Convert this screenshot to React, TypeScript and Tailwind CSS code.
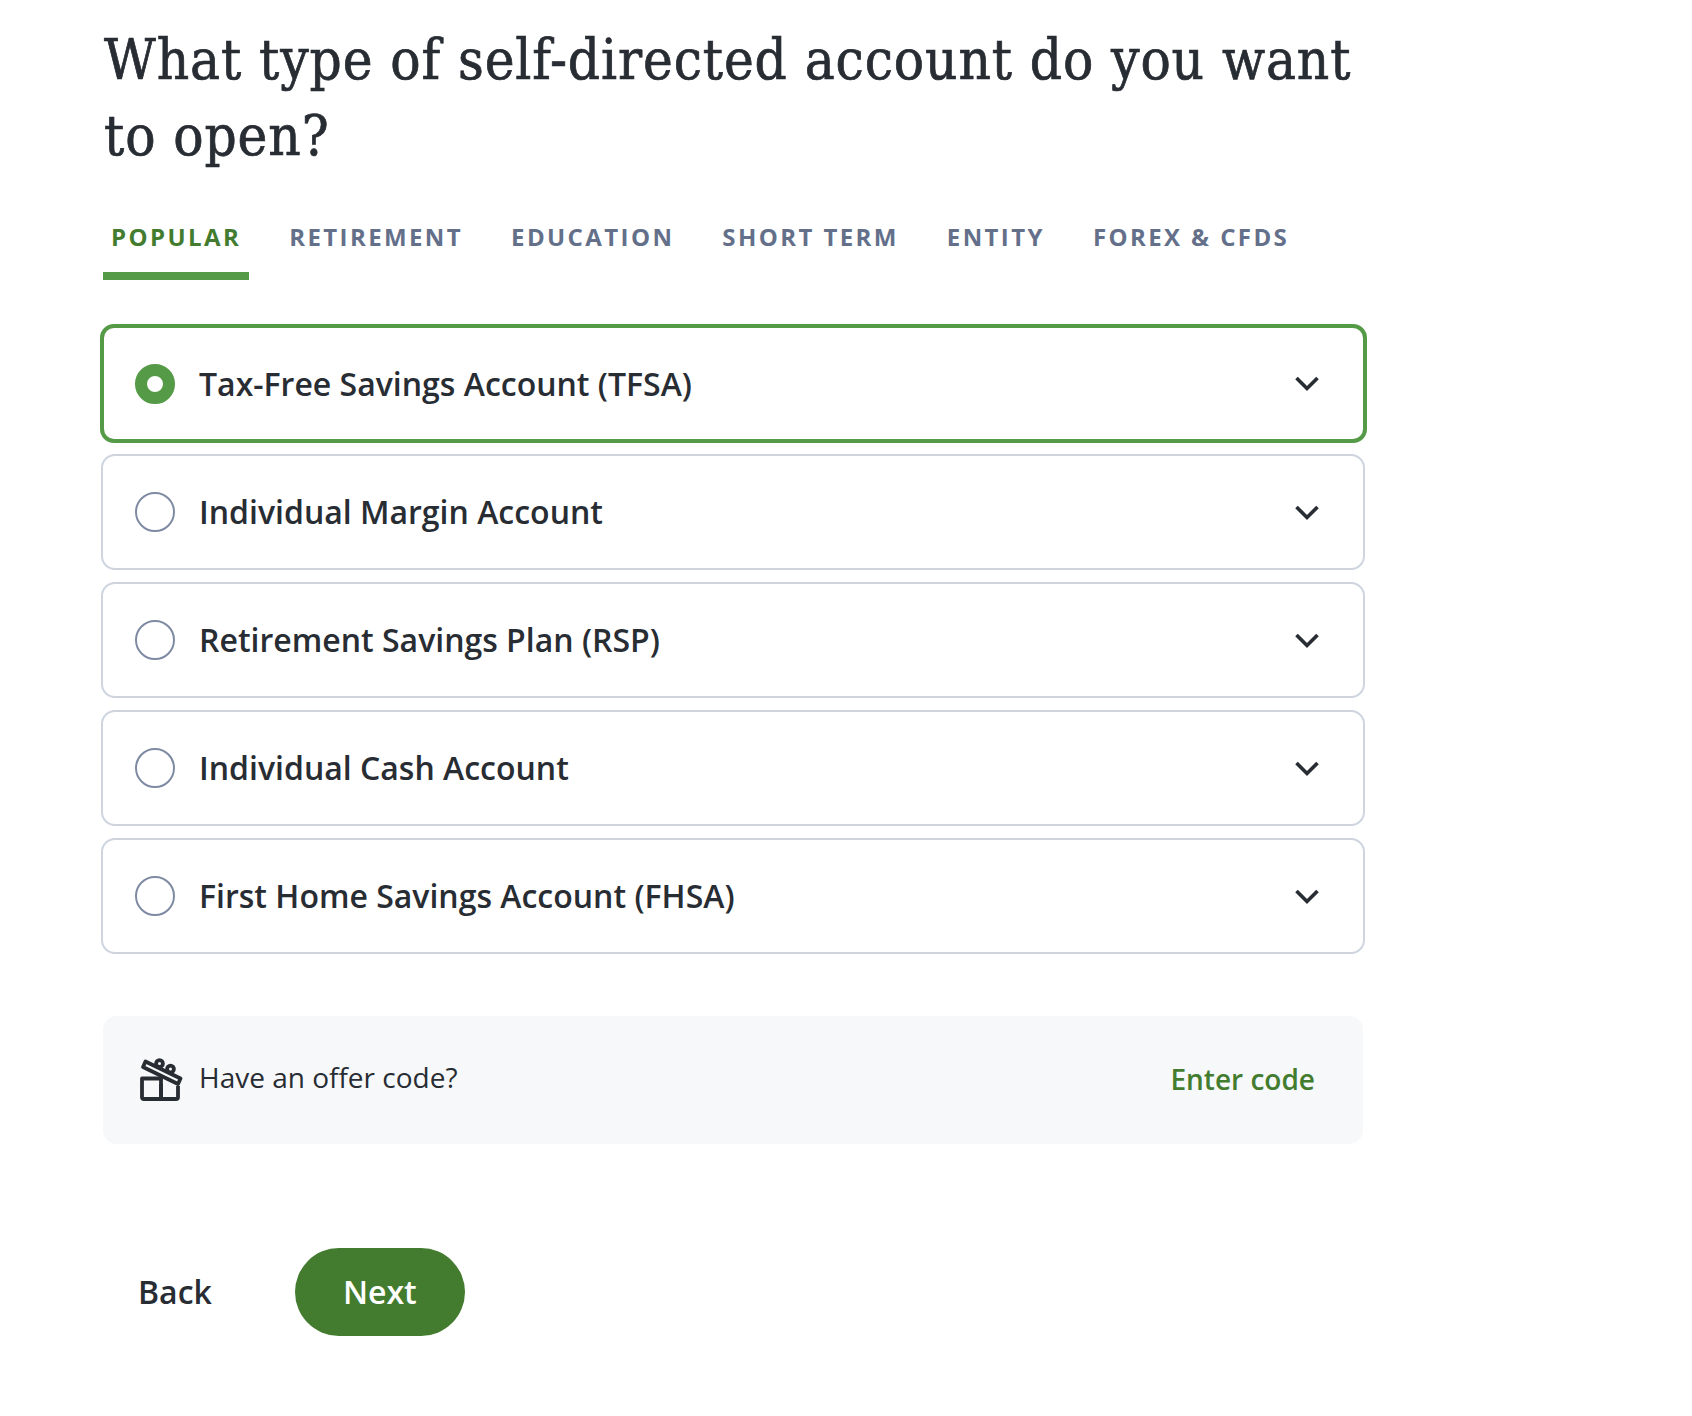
const tabs = ["POPULAR", "RETIREMENT", "EDUCATION", "SHORT TERM", "ENTITY", "FOREX & CFDS"]

const accounts = [
    "Tax-Free Savings Account (TFSA)",
    "Individual Margin Account",
    "Retirement Savings Plan (RSP)",
    "Individual Cash Account",
    "First Home Savings Account (FHSA)",
]

function Chevron() {
    return (
        <svg width="24" height="16" viewBox="0 0 24 16" fill="none" className="mt-[1px] shrink-0">
            <path d="M1.5 2 L12 12.5 L22.5 2" stroke="#282c33" strokeWidth="3.6" />
        </svg>
    )
}

function GiftIcon() {
    return (
        <svg width="44" height="44" viewBox="0 0 44 44" fill="none" stroke="#282c33" strokeWidth="3.8" strokeLinejoin="round" className="shrink-0">
            <path d="M2 20.5 H21 V41 H4 A2 2 0 0 1 2 39 Z" />
            <path d="M21 26 V41 H36 A2 2 0 0 0 38 39 V28" />
            <circle cx="19.5" cy="5.5" r="3.4" />
            <circle cx="30.5" cy="11" r="3.4" />
            {/* lid sits over the bows */}
            <path d="M5.5 3.5 L40.5 20.5 L38 26 L3 9 Z" fill="#f7f8fa" />
        </svg>
    )
}

export default function App() {
    return (
        <div className="min-h-[1416px] bg-white pl-[100px] font-['Open_Sans',sans-serif] text-[#282c33]">
            <div className="w-[1267px]">
                <h1 className="pl-[4px] pt-[22px] font-['DejaVu_Serif',serif] text-[56px] leading-[76px] tracking-[0.9px] [font-stretch:condensed] [-webkit-text-stroke:0.7px_#282c33]">
                    What type of self-directed account do you want
                    <br />
                    to open?
                </h1>

                <div className="mt-[35px] flex gap-[32px] pl-[3px]">
                    {tabs.map((tab, i) => (
                        <div
                            key={tab}
                            className={
                                i === 0
                                    ? "border-b-[8px] border-[#559a47] px-[8px] pb-[19px] pt-[12px] text-[24px] font-bold leading-[32px] tracking-[2.4px] text-[#437c2f]"
                                    : "px-[8px] pb-[27px] pt-[12px] text-[24px] font-bold leading-[32px] tracking-[2.4px] text-[#64708a]"
                            }
                        >
                            {tab}
                        </div>
                    ))}
                </div>

                <div className="mt-[44px] flex flex-col gap-[12px]">
                    {accounts.map((name, i) => (
                        <div
                            key={name}
                            className={
                                i === 0
                                    ? "-mb-[1px] flex h-[119px] items-center rounded-[14px] border-[4px] border-[#559a47] pl-[31px] pr-[44px]"
                                    : "ml-[1px] mr-[2px] flex h-[116px] items-center rounded-[14px] border-[2px] border-[#ced5df] pl-[32px] pr-[44px]"
                            }
                        >
                            {i === 0 ? (
                                <span className="h-[40px] w-[40px] shrink-0 rounded-full border-[12px] border-[#559a47]" />
                            ) : (
                                <span className="h-[40px] w-[40px] shrink-0 rounded-full border-[2px] border-[#7f8ba3]" />
                            )}
                            <span className="ml-[24px] flex-1 text-[32px] font-semibold">{name}</span>
                            <Chevron />
                        </div>
                    ))}
                </div>

                <div className="ml-[3px] mr-[4px] mt-[62px] flex h-[128px] items-center rounded-[14px] bg-[#f7f8fa] pl-[37px] pr-[48px]">
                    <GiftIcon />
                    <span className="ml-[15px] flex-1 pb-[6px] text-[28px]">Have an offer code?</span>
                    <span className="pb-[3px] text-[28px] font-semibold text-[#437c2f]">Enter code</span>
                </div>

                <div className="mt-[104px] flex items-center pl-[38px]">
                    <span className="text-[32px] font-semibold">Back</span>
                    <span className="ml-[83px] flex h-[88px] w-[170px] items-center justify-center rounded-full bg-[#437c2f] text-[32px] font-semibold text-white">
                        Next
                    </span>
                </div>
            </div>
        </div>
    )
}
